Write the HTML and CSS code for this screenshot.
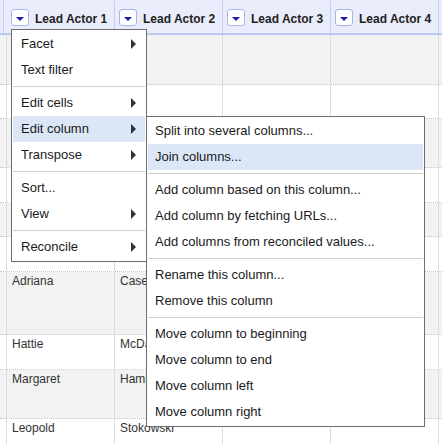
FILE: index.html
```html
<!DOCTYPE html>
<html>
<head>
<meta charset="utf-8">
<link rel="stylesheet" href="styles.css">
</head>
<body>
<div class="grid">
  <div class="header">
    <div class="hcell first"><span class="dd"><span class="tri"></span></span><span class="hl">Lead Actor 1</span></div>
    <div class="hcell"><span class="dd"><span class="tri"></span></span><span class="hl">Lead Actor 2</span></div>
    <div class="hcell"><span class="dd"><span class="tri"></span></span><span class="hl">Lead Actor 3</span></div>
    <div class="hcell"><span class="dd"><span class="tri"></span></span><span class="hl">Lead Actor 4</span></div>
    <div class="hcell rest"></div>
  </div>
  <div class="row odd h50"><div class="cell"></div><div class="cell"></div><div class="cell"></div><div class="cell"></div><div class="cell rest"></div></div>
  <div class="row h34"><div class="cell"></div><div class="cell"></div><div class="cell"></div><div class="cell"></div><div class="cell rest"></div></div>
  <div class="row odd h49"><div class="cell"></div><div class="cell"></div><div class="cell"></div><div class="cell"></div><div class="cell rest"></div></div>
  <div class="row h35"><div class="cell"></div><div class="cell"></div><div class="cell"></div><div class="cell"></div><div class="cell rest"></div></div>
  <div class="row odd h34"><div class="cell"></div><div class="cell"></div><div class="cell"></div><div class="cell"></div><div class="cell rest"></div></div>
  <div class="row h35"><div class="cell"></div><div class="cell"></div><div class="cell"></div><div class="cell"></div><div class="cell rest"></div></div>
  <div class="row odd h63"><div class="cell">Adriana</div><div class="cell">Caselotti</div><div class="cell"></div><div class="cell"></div><div class="cell rest"></div></div>
  <div class="row h35"><div class="cell">Hattie</div><div class="cell">McDaniel</div><div class="cell"></div><div class="cell"></div><div class="cell rest"></div></div>
  <div class="row odd h49"><div class="cell">Margaret</div><div class="cell">Hamilton</div><div class="cell"></div><div class="cell"></div><div class="cell rest"></div></div>
  <div class="row h35"><div class="cell">Leopold</div><div class="cell">Stokowski</div><div class="cell"></div><div class="cell"></div><div class="cell rest"></div></div>
</div>

<div class="menu main-menu">
  <div class="item sub">Facet</div>
  <div class="item">Text filter</div>
  <div class="sep"></div>
  <div class="item sub">Edit cells</div>
  <div class="item sub active">Edit column</div>
  <div class="item sub">Transpose</div>
  <div class="sep"></div>
  <div class="item">Sort...</div>
  <div class="item sub">View</div>
  <div class="sep"></div>
  <div class="item sub">Reconcile</div>
</div>

<div class="menu sub-menu">
  <div class="item">Split into several columns...</div>
  <div class="item active">Join columns...</div>
  <div class="sep"></div>
  <div class="item">Add column based on this column...</div>
  <div class="item">Add column by fetching URLs...</div>
  <div class="item">Add columns from reconciled values...</div>
  <div class="sep"></div>
  <div class="item">Rename this column...</div>
  <div class="item">Remove this column</div>
  <div class="sep"></div>
  <div class="item">Move column to beginning</div>
  <div class="item">Move column to end</div>
  <div class="item">Move column left</div>
  <div class="item">Move column right</div>
</div>
</body>
</html>
```
FILE: styles.css
```css
html, body {
  margin: 0;
  padding: 0;
  background: #fff;
  font-family: "Liberation Sans", Arial, sans-serif;
  width: 442px;
  height: 444px;
  overflow: hidden;
  position: relative;
}

.grid {
  width: 442px;
}

.header {
  display: flex;
  height: 35px;
  box-sizing: border-box;
  background: #e9ecfa;
  border-bottom: 2px solid #b8c8f4;
  padding-left: 3px;
}

.hcell {
  width: 108px;
  flex: none;
  box-sizing: border-box;
  border-left: 1px solid #c6cff2;
  padding-left: 4px;
  display: flex;
  align-items: flex-start;
}

.hcell.first {
  width: 111px;
  padding-left: 7px;
}

.hcell.rest {
  flex: 1;
  width: auto;
}

.dd {
  width: 18px;
  height: 17px;
  box-sizing: border-box;
  margin-top: 9px;
  border: 1px solid #aab4ee;
  border-radius: 3px;
  background: #fff;
  display: flex;
  justify-content: center;
  align-items: flex-start;
  padding-top: 7px;
}

.tri {
  width: 0;
  height: 0;
  border-left: 4px solid transparent;
  border-right: 4px solid transparent;
  border-top: 4px solid #1c1cb0;
}

.hl {
  margin-left: 6px;
  margin-top: 12px;
  font-size: 12px;
  line-height: 14px;
  font-weight: bold;
  color: #222;
  white-space: nowrap;
}

.row {
  display: flex;
  box-sizing: border-box;
  padding-left: 6px;
  border-bottom: 1px dotted #c8c8c8;
  background: #fff;
}

.row.odd {
  background: #f2f2f2;
}

.h34 { height: 34px; }
.h35 { height: 35px; }
.h49 { height: 49px; }
.h50 { height: 50px; }
.h63 { height: 63px; }

.cell {
  width: 108px;
  flex: none;
  box-sizing: border-box;
  border-left: 1px solid #dcdcdc;
  padding: 2px 5px;
  font-size: 12px;
  line-height: 14px;
  color: #333;
  white-space: nowrap;
  overflow: hidden;
}

.cell.rest {
  flex: 1;
  width: auto;
}

.menu {
  position: absolute;
  background: #fff;
  border: 1px solid #6e6e6e;
  padding: 1px;
  box-sizing: border-box;
}

.main-menu {
  left: 11px;
  top: 29px;
  width: 136px;
}

.sub-menu {
  left: 146px;
  top: 116px;
  width: 279px;
}

.item {
  position: relative;
  height: 26px;
  line-height: 26px;
  padding-left: 8px;
  font-size: 13px;
  color: #1a1a1a;
  white-space: nowrap;
}

.sub-menu .item {
  padding-left: 7px;
}

.item.active {
  background: #dbe6f6;
}

.item.sub::after {
  content: "";
  position: absolute;
  right: 9px;
  top: 8px;
  width: 0;
  height: 0;
  border-left: 5px solid #333;
  border-top: 5px solid transparent;
  border-bottom: 5px solid transparent;
}

.sep {
  height: 1px;
  background: #cfcfcf;
  margin: 3px 0;
}
```
